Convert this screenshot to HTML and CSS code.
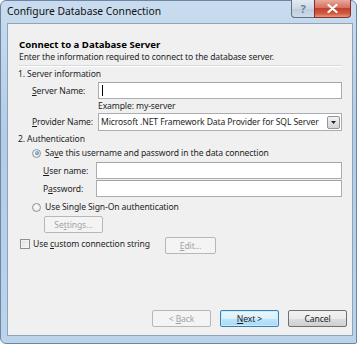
FILE: index.html
```html
<!DOCTYPE html>
<html lang="en">
<head>
  <meta charset="UTF-8" />
  <title>Configure Database Connection</title>
  <link rel="stylesheet" href="styles.css">
</head>
<body>

  <div class="window">
    <div class="titlebar">
      <span class="title">Configure Database Connection</span>
      <div class="caption-btns">
        <span class="cap-help">?</span>
        <span class="cap-close">
          <svg width="11" height="9" viewBox="0 0 11 9">
            <path d="M1.5 1 L9.5 8 M9.5 1 L1.5 8" stroke="#ffffff" stroke-width="2.2" stroke-linecap="round"/>
          </svg>
        </span>
      </div>
    </div>

    <div class="client">
      <div class="page-head">
        <h1>Connect to a Database Server</h1>
        <p>Enter the information required to connect to the database server.</p>
      </div>
      <div class="separator"></div>

      <div class="group-title">1. Server information</div>
      <div class="field server">
        <label><u>S</u>erver Name:</label>
        <div class="textbox"><span class="caret"></span></div>
      </div>
      <div class="hint">Example: my-server</div>
      <div class="field provider">
        <label><u>P</u>rovider Name:</label>
        <div class="combo">
          <span class="combo-text">Microsoft .NET Framework Data Provider for SQL Server</span>
          <span class="combo-btn">
            <svg width="5" height="3" viewBox="0 0 5 3"><path d="M0 0 H5 L2.5 3 Z" fill="#222"/></svg>
          </span>
        </div>
      </div>

      <div class="group-title auth-title">2. Authentication</div>
      <div class="option">
        <span class="radio checked"></span>
        <span>Sa<u>v</u>e this username and password in the data connection</span>
      </div>
      <div class="field sub">
        <label><u>U</u>ser name:</label>
        <div class="textbox"></div>
      </div>
      <div class="field sub pass">
        <label>P<u>a</u>ssword:</label>
        <div class="textbox"></div>
      </div>
      <div class="option sso">
        <span class="radio"></span>
        <span>Use Single Sign-On authentication</span>
      </div>
      <div class="settings-row">
        <button class="btn disabled">Se<u>t</u>tings...</button>
      </div>

      <div class="custom-row">
        <div class="option check-opt">
          <span class="checkbox"></span>
          <span>Use <u>c</u>ustom connection string</span>
        </div>
        <button class="btn disabled edit-btn"><u>E</u>dit...</button>
      </div>

      <div class="footer">
        <button class="btn disabled">&lt; <u>B</u>ack</button>
        <button class="btn default"><u>N</u>ext &gt;</button>
        <button class="btn">Cancel</button>
      </div>
    </div>
  </div>

</body>
</html>
```

FILE: styles.css
```css
:root {
  --frame-top: #c9dcef;
  --frame-bottom: #b3cbe6;
  --face: #f0f0f0;
  --text: #1e1e1e;
  --box-border: #abadb3;
  --disabled: #a3a3a3;
}

* {
  box-sizing: border-box;
  margin: 0;
  padding: 0;
}

body {
  background: #ffffff;
  font-family: 'Noto Sans', 'Open Sans', sans-serif;
  font-size: 8.6px;
  letter-spacing: -0.12px;
  color: var(--text);
}

u {
  text-decoration: underline;
  text-underline-offset: 1px;
}

.window {
  width: 357px;
  height: 344px;
  display: flex;
  flex-direction: column;
  background: linear-gradient(to bottom, var(--frame-top), var(--frame-bottom) 40%, #bcd3ec);
  border: 1px solid #6d86a3;
  border-radius: 6px 6px 2px 6px;
  padding: 0 3px 7px 6px;
}

.titlebar {
  height: 22px;
  display: flex;
  align-items: flex-start;
  justify-content: space-between;
}

.title {
  font-size: 10.3px;
  letter-spacing: 0;
  color: #111;
  padding-top: 4px;
  line-height: 13px;
}

.caption-btns {
  display: flex;
  margin-right: 2px;
  margin-top: -1px;
}

.caption-btns span {
  height: 18px;
  display: flex;
  align-items: center;
  justify-content: center;
  border: 1px solid #5f6f84;
  border-top: none;
}

.cap-help {
  width: 23px;
  border-radius: 0 0 0 4px;
  border-right: none !important;
  background: linear-gradient(to bottom, #e3eaf2, #cdd8e4 50%, #bccbdb 51%, #cfdbe8);
  color: #6e829a;
  font-weight: bold;
  font-size: 11px;
}

.cap-close {
  width: 37px;
  border-radius: 0 0 4px 0;
  border-color: #83302a !important;
  background: linear-gradient(to bottom, #e9a99c, #d5705f 45%, #c4402e 50%, #d15a43 80%, #e39a7c);
}

.client {
  flex: 1;
  display: flex;
  flex-direction: column;
  background: var(--face);
  border: 1px solid #8fa4bb;
  padding: 0 10px 0 10px;
}

.page-head {
  padding: 14px 0 0 1px;
}

.page-head h1 {
  font-size: 9.6px;
  letter-spacing: 0;
  font-weight: bold;
  line-height: 13px;
  color: #000;
}

.page-head p {
  line-height: 13px;
}

.separator {
  margin: 1px 0 0 1px;
  height: 2px;
  border-top: 1px solid #d5dbe1;
  border-bottom: 1px solid #ffffff;
}

.group-title {
  line-height: 12px;
  margin-top: 1px;
}

.field {
  display: grid;
  grid-template-columns: 66px 1fr;
  align-items: center;
  height: 17px;
  margin-top: 2px;
  padding-left: 14px;
}

.field label {
  line-height: 12px;
}

.textbox {
  height: 17px;
  background: #ffffff;
  border: 1px solid var(--box-border);
  border-top-color: #a0a3aa;
  display: flex;
  align-items: center;
  padding-left: 3px;
}

.caret {
  width: 1px;
  height: 11px;
  background: #000;
}

.hint {
  padding-left: 80px;
  line-height: 13px;
  margin-top: 1px;
}

.provider {
  height: 18px;
  margin-top: 0;
}

.combo {
  height: 18px;
  background: #ffffff;
  border: 1px solid var(--box-border);
  display: flex;
  align-items: center;
  padding: 0 1px 0 2px;
}

.combo-text {
  flex: 1;
  white-space: nowrap;
  overflow: hidden;
}

.combo-btn {
  width: 13px;
  height: 13px;
  border: 1px solid #8e959c;
  border-radius: 2px;
  background: linear-gradient(to bottom, #f4f4f4, #e2e2e2 50%, #d4d4d4);
  display: flex;
  align-items: center;
  justify-content: center;
}

.auth-title {
  margin-top: 2px;
  line-height: 13px;
}

.option {
  display: flex;
  align-items: center;
  gap: 4px;
  line-height: 12px;
  padding-left: 14px;
  margin-top: 1px;
}

.radio {
  width: 9px;
  height: 9px;
  border-radius: 50%;
  border: 1px solid #8f969c;
  background: radial-gradient(circle at 50% 40%, #ffffff, #dcdcdc);
  display: flex;
  align-items: center;
  justify-content: center;
}

.radio.checked::after {
  content: '';
  width: 4px;
  height: 4px;
  border-radius: 50%;
  background: radial-gradient(circle at 40% 35%, #9ad1f5, #2a6ea8);
}

.sub {
  grid-template-columns: 53px 1fr;
  padding-left: 25px;
  margin-top: 3px;
}

.pass {
  margin-top: 1px;
}

.sso {
  margin-top: 4px;
}

.settings-row {
  padding-left: 26px;
  margin-top: 3px;
}

.btn {
  font-family: inherit;
  font-size: 8.6px;
  letter-spacing: -0.12px;
  color: var(--text);
  height: 17px;
  width: 59px;
  border: 1px solid #707070;
  border-radius: 2px;
  background: linear-gradient(to bottom, #f2f2f2, #ebebeb 50%, #dddddd 51%, #cfcfcf);
}

.btn.disabled {
  color: var(--disabled);
  border-color: #b5b8bb;
  background: #f4f4f4;
}

.custom-row {
  display: flex;
  align-items: flex-start;
  margin-top: 4px;
  height: 17px;
}

.check-opt {
  width: 147px;
  padding-left: 2px;
  margin-top: 1px;
  gap: 3px;
}

.checkbox {
  width: 10px;
  height: 10px;
  border: 1px solid #8f8f8f;
  background: linear-gradient(135deg, #e0e0e0, #f8f8f8);
  box-shadow: inset 0 0 0 1px #f4f4f4;
}

.edit-btn {
  width: 51px;
}

.footer {
  margin-top: auto;
  display: flex;
  justify-content: flex-end;
  gap: 9px;
  padding-bottom: 8px;
  margin-right: -5px;
}

.btn.default {
  border-color: #3c7fb1;
  background: linear-gradient(to bottom, #eaf6fd, #d9f0fc 50%, #bee6fd 51%, #a7d9f5);
  box-shadow: inset 0 0 0 1px #c7ecfd;
}
```
